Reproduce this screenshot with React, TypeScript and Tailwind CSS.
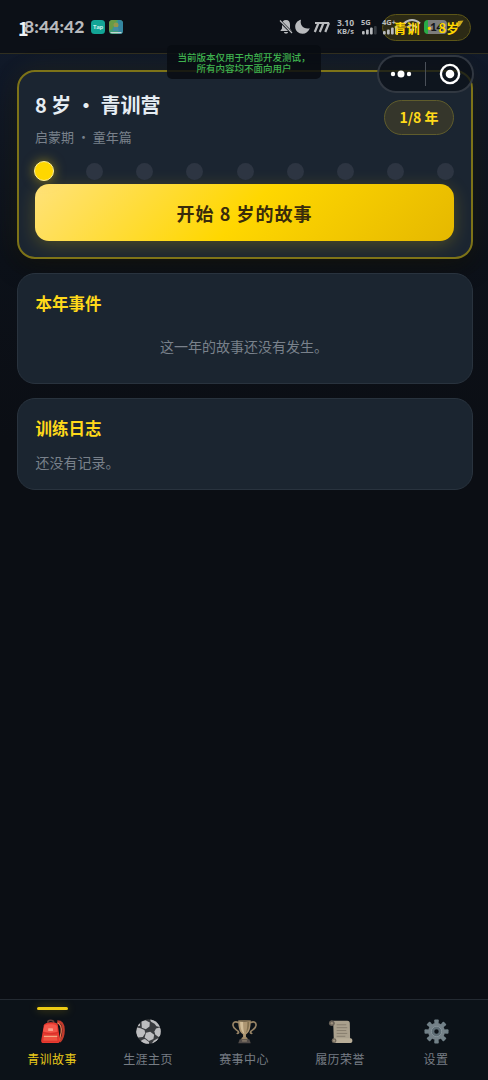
import type { ReactNode } from 'react';

interface TabItem {
  label: string;
  icon: ReactNode;
}

const STAGES = [8, 9, 10, 11, 12, 13, 14, 15, 16];

function BackpackIcon() {
  return (
    <svg viewBox="0 0 26 26" className="h-[25px] w-[25px]">
      <path d="M18 2.500c4.500 0 6.500 4 6.500 9 0 5-1 9-4 12" fill="none" stroke="#c23a2c" strokeWidth="2.600" />
      <path d="M18 4c3 1 4.600 5 4 10l-2 9" fill="none" stroke="#f47b52" strokeWidth="1.300" />
      <path d="M8 4c0-3.500 6-3.500 6.500 0" fill="none" stroke="#69443c" strokeWidth="1.600" />
      <path d="M4 6.500C5 3 17 2 18.500 6l2.200 16c.2 2.200-1 3-3 3H4c-2.300 0-3-1-2.700-3z" fill="#e8392f" />
      <path d="M4.500 7c3-2 10-2 13 0l.7 6c-4 1.600-10 1.600-15 0z" fill="#f4574a" />
      <path d="M3 14c5 1.800 11 1.800 16 0" fill="none" stroke="#d02f29" strokeWidth=".8" />
      <rect x="8.500" y="9.500" width="5" height="3" rx=".6" fill="#f9a18c" />
      <path d="M3.500 17.500h14.500l.7 5.500H3z" fill="#f0513f" stroke="#c52b27" strokeWidth=".5" />
      <path d="M4 18h14" stroke="#f6b48b" strokeWidth="1.200" />
    </svg>
  );
}

function BallIcon() {
  return (
    <svg viewBox="0 0 25 25" className="h-[25px] w-[25px]">
      <defs>
        <clipPath id="ball">
          <circle cx="12.500" cy="12.500" r="12.300" />
        </clipPath>
      </defs>
      <g clipPath="url(#ball)">
        <circle cx="12.500" cy="12.500" r="12.500" fill="#393b3e" />
        <g fill="#bdbdbf">
          <path d="M5.500 2.500L9.500 1.200l4.300 2.300-.3 4-3.700 2.700-4-1.500z" />
          <path d="M15 2.800L14 .5l4-.5 6 5.500-.3 2.500-3.200-.8-2-2.500z" />
          <path d="M1 8.500l3.500.8 4 1.800.8 2.800-2.500 4-5 .5-2-5z" />
          <path d="M10 13.800l4.200-1.100 4 3-.8 4.200-4.500 2-4.300-3.300z" />
          <path d="M20 9.500l3.500-1 2 1.500-.3 6-2.700 2-3.300-2.500-.8-3z" />
          <path d="M7 20.500l2-.5 4 3v2.500H8l-4-3z" />
          <path d="M18 21.500l3.500-2 1.500.3-4.500 4.500-3 .5z" />
          <path d="M2.200 5.800L4 4.200v2.600l-2 .4z" />
        </g>
      </g>
    </svg>
  );
}

function TrophyIcon() {
  return (
    <svg viewBox="0 0 26 26" className="h-[25px] w-[25px]">
      <path
        d="M7 3.800C3 2 .8 3.500 1 6.500c.3 4 4 4.500 5.500 6.500 1 1.500-.5 2.500-1.500 1.500M19 3.800c4-1.800 6.200-.3 6 2.700-.3 4-4 4.500-5.500 6.500-1 1.500.5 2.500 1.500 1.500"
        fill="none"
        stroke="#988466"
        strokeWidth="1.700"
      />
      <path d="M6.500 1.500h13c0 8-1.500 12.500-5 14.500v4.500h-3V16C8 14 6.500 9.500 6.500 1.500z" fill="#ad9672" />
      <path d="M8.500 3h3c0 5 .3 9 1.500 12.500C10 13.500 8.500 9 8.500 3z" fill="#d1bd98" />
      <path d="M16 3h2c0 5-1 9-3.500 11.500C15.600 11 16 7 16 3z" fill="#82704f" />
      <ellipse cx="13" cy="2" rx="6.500" ry="1" fill="#75664d" />
      <path d="M10.500 19h5l1.500 3H9z" fill="#9c8767" />
      <path d="M8 21h10l1.500 4.300h-13z" fill="#514b49" />
      <path d="M10.500 22h5v1.500h-5z" fill="#86796a" />
    </svg>
  );
}

function ScrollIcon() {
  return (
    <svg viewBox="0 0 26 26" className="h-[25px] w-[25px]">
      <path d="M3 1.800h17c2 0 2.800 1.200 2.700 3L23 21H6L5.500 6H3z" fill="#aaa08d" />
      <path d="M3.500 1.500c2.500 0 3.500 1.200 3.500 3s-1.200 2.800-3 2.800S1 6.300 1 4.400s1-2.900 2.500-2.900z" fill="#696158" />
      <circle cx="4" cy="4.500" r="1.300" fill="#9b8f7d" />
      <path d="M9 6h10M9 9h11M9 12h10M9 15h11M9 18h9" stroke="#7d7466" strokeWidth=".8" />
      <path d="M6 20h17.500c2.500 0 2.500 5 0 5H6.500z" fill="#b8ad98" />
      <circle cx="6.300" cy="22.500" r="2.500" fill="#71685c" />
      <circle cx="6.300" cy="22.500" r="1.100" fill="#a49883" />
    </svg>
  );
}

function GearIcon() {
  return (
    <svg viewBox="0 0 26 26" className="h-[25px] w-[25px]">
      <g fill="#718087">
        {[0, 45, 90, 135, 180, 225, 270, 315].map((a) => (
          <path key={a} d="M11 6l-.4-4.500q0-1 1-1h2.800q1 0 1 1L15 6z" transform={`rotate(${a} 13 13)`} />
        ))}
      </g>
      <circle cx="13" cy="13" r="6.500" fill="none" stroke="#748188" strokeWidth="4.500" />
      <circle cx="13" cy="13" r="5.200" fill="none" stroke="#8a989f" strokeWidth="1" />
      <circle cx="13" cy="13" r="3.600" fill="none" stroke="#5f6e76" strokeWidth="2.600" />
    </svg>
  );
}

const TABS: TabItem[] = [
  { label: '青训故事', icon: <BackpackIcon /> },
  { label: '生涯主页', icon: <BallIcon /> },
  { label: '赛事中心', icon: <TrophyIcon /> },
  { label: '履历荣誉', icon: <ScrollIcon /> },
  { label: '设置', icon: <GearIcon /> },
];

function Signal({ label, last }: { label: string; last: string }) {
  return (
    <div className="flex w-[17px] flex-col">
      <span className="h-[8px] whitespace-nowrap text-[7.500px] leading-[8px] font-bold">{label}</span>
      <svg viewBox="0 0 17 9" className="h-[9px] w-[17px]" fill="#b9bbbe">
        <rect x="1" y="5" width="2.700" height="3.500" rx="1" />
        <rect x="5" y="3.500" width="2.700" height="5" rx="1" />
        <rect x="9" y="1.500" width="2.700" height="7" rx="1" />
        <rect x="13" y="0" width="2.700" height="8.500" rx="1" fill={last} />
      </svg>
    </div>
  );
}

// System status bar, drawn over the app header
function StatusBar() {
  return (
    <div className="pointer-events-none absolute inset-x-0 top-0 z-10 h-[54px] text-[#b9bbbe]">
      <div className="absolute top-[15px] left-[24px] flex h-6 items-center">
        <span className="w-[62px] whitespace-nowrap font-['Lato'] text-[17.500px] font-black tracking-[0.1px]">8:44:42</span>
        <span className="ml-[5px] flex h-[14px] w-[14px] items-center justify-center rounded-[3.500px] bg-[#13a596] font-['Open_Sans'] text-[6px] font-bold tracking-[-0.3px] text-[#c6efe9]">
          Tap
        </span>
        <svg viewBox="0 0 14 14" className="ml-[4px] h-[14px] w-[14px] rounded-[3.500px]">
          <rect width="14" height="14" fill="#3c9d79" />
          <path d="M0 0h8L3 9l-3 2z" fill="#689b45" />
          <path d="M9 0h5v14H9z" fill="#3485a0" />
          <circle cx="7" cy="5" r="2.500" fill="#96954b" />
          <path d="M5 7h4l1 4H4z" fill="#438ba2" />
          <path d="M1.500 12h11v1.300h-11z" fill="#c5d6d2" />
        </svg>
      </div>

      <svg viewBox="0 0 52 16" className="absolute top-[19px] left-[279px] h-4 w-[52px]" fill="#b9bbbe">
        <path d="M7 1c-2.800 0-4 2-4 4.500v4L1.300 12h11.400L11 9.500v-4C11 3 9.800 1 7 1zM5 13h4c0 2-4 2-4 0z" />
        <path d="M1 2l12 12" stroke="#0d1117" strokeWidth="2.600" />
        <path d="M1 1.500l12 12.500" stroke="#b9bbbe" strokeWidth="1.200" />
        <path d="M22 .8c-1.500 5 2.500 10 8.800 8.500-1.200 3.500-4 5.500-7.300 5.500-4 0-7.300-3-7.300-7C16.200 4.300 18.600 1.500 22 .8z" />
        <path d="M36 4h14.200M39.500 4l-3.700 9M44.500 4l-3.700 9M50 4l-3.700 9" fill="none" stroke="#b9bbbe" strokeWidth="2.200" />
      </svg>

      <div className="absolute top-[19px] left-[336px] flex w-[19px] flex-col items-center font-['Open_Sans'] text-[8.500px] leading-[8px] font-bold">
        <span>3.10</span>
        <span className="text-[7.500px]">KB/s</span>
      </div>
      <div className="absolute top-[18px] left-[361px] flex gap-[4px] font-['Open_Sans']">
        <Signal label="5G" last="#353a40" />
        <Signal label="4G+" last="#b9bbbe" />
      </div>
      <svg viewBox="0 0 18 15" className="absolute top-[19px] left-[403px] h-[15px] w-[18px]" fill="none" stroke="#b9bbbe" strokeWidth="2.200">
        <path d="M1 4.500c5-4.500 11-4.500 16 0M4 8.500c3-3 7-3 10 0" />
        <path d="M6.500 10.500L9 14l2.500-3.500c-1.500-1.500-3.500-1.500-5 0z" fill="#b9bbbe" stroke="none" />
      </svg>
      <div className="absolute top-[20px] left-[424px] flex h-[14px] w-[23px] items-center rounded-[4px] border-l-[4px] border-[#28ac45] bg-[#7c7d7c] pl-[2px] font-['Lato'] text-[12px] font-black tracking-[-0.4px] text-[#15181c]">
        14
      </div>
      <svg viewBox="0 0 9 12" className="absolute top-[20px] left-[455px] h-3 w-[9px]">
        <path d="M3 1l5.500-.5L5 6 2 8z" fill="#cda91c" />
      </svg>
    </div>
  );
}

function Capsule() {
  return (
    <div className="absolute top-[55px] left-[377px] z-20 flex h-[38px] w-[97px] items-center rounded-full border-2 border-[#3b414b]/80 bg-[#0b1018]/75">
      <svg viewBox="0 0 93 34" className="h-[34px] w-[93px]" fill="#fff">
        <circle cx="14" cy="17" r="2.200" />
        <circle cx="22" cy="17" r="3.500" />
        <circle cx="30" cy="17" r="2.200" />
        <path d="M46 5h1v24h-1z" fill="#4a5059" />
        <circle cx="71" cy="17" r="9.100" fill="none" stroke="#fff" strokeWidth="2.300" />
        <circle cx="71" cy="17" r="4.300" />
      </svg>
    </div>
  );
}

export default function App() {
  return (
    <div
      lang="zh-CN"
      className="relative flex h-[1080px] w-[488px] flex-col overflow-hidden bg-[#0b0e14] bg-[linear-gradient(180deg,#111b2b_0px,#101827_90px,#0c1119_260px,#0b0e14_440px)] font-['Noto_Sans_CJK_SC',sans-serif] text-[#e6edf3]"
    >
      <header className="flex h-[54px] shrink-0 items-center justify-between border-b border-[#302f20] bg-[#0c1017] pr-[17px] pl-[18px]">
        <span className="mt-[3px] text-[18px] font-bold text-[#f0f3f6]">1</span>
        <span className="mt-[2px] flex h-[27px] w-[89px] items-center justify-center rounded-full border border-[#5d5618] bg-[#2c2a15] text-[13px] font-bold whitespace-pre text-[#ffd700]">
          <span className="relative z-20">青训 · 8岁</span>
        </span>
      </header>

      <main className="flex flex-1 flex-col gap-[14px] pt-[16px] pr-[15.500px] pl-[16.500px]">
        <section className="h-[189px] rounded-[18px] border-2 border-[#7d7318] bg-[#1b2531] px-[16.500px] shadow-[0_0_28px_rgba(255,215,0,0.07),0_8px_24px_rgba(0,0,0,0.4)]">
          <div className="flex h-[82px] justify-between">
            <div className="pt-[18px]">
              <h1 className="text-[20px] leading-[30px] font-bold whitespace-nowrap">8 岁 · 青训营</h1>
              <p className="mt-[7px] text-[13px] leading-[20px] whitespace-nowrap text-[#79818b]">启蒙期 · 童年篇</p>
            </div>
            <span className="mt-[28px] flex h-[35px] w-[70px] items-center justify-center rounded-full border border-[#5f5c2c] bg-[#35362b] text-[14px] font-bold text-[#ffd91a]">
              1/8 年
            </span>
          </div>
          <div className="flex h-[30px] items-center justify-between pt-[4px]">
            {STAGES.map((age, i) =>
              i === 0 ? (
                <span
                  key={age}
                  className="-mr-[1px] -ml-[1px] h-5 w-5 rounded-full border-[1.500px] border-[#fff09a] bg-[#ffd700] shadow-[0_0_12px_rgba(255,215,0,0.5)]"
                />
              ) : (
                <span key={age} className="h-[17px] w-[17px] rounded-full bg-[#2d3542]" />
              ),
            )}
          </div>
          <button className="flex h-[57px] w-full items-center justify-center rounded-[14px] bg-[linear-gradient(135deg,#ffe27a_0%,#ffd700_50%,#e5b800_100%)] pt-px text-[18px] font-bold tracking-[1px] text-[#392b0b] shadow-[0_4px_18px_rgba(255,215,0,0.22)]">
            开始 8 岁的故事
          </button>
        </section>

        <section className="h-[111px] rounded-[18px] border border-[#29333e] bg-[#1b2530] px-[18px] pt-[16px]">
          <h2 className="text-[16.500px] leading-[26px] font-bold text-[#ffd91a]">本年事件</h2>
          <p className="mt-[19px] -ml-px text-center text-[14px] leading-[22px] text-[#79818b]">这一年的故事还没有发生。</p>
        </section>

        <section className="h-[92px] rounded-[18px] border border-[#29333e] bg-[#1b2530] px-[18px] pt-[16px]">
          <h2 className="text-[16.500px] leading-[26px] font-bold text-[#ffd91a]">训练日志</h2>
          <p className="mt-[10px] text-[14px] leading-[22px] text-[#79818b]">还没有记录。</p>
        </section>
      </main>

      <nav className="flex h-[81px] shrink-0 border-t border-[#242a32] bg-[#0c1218] px-1">
        {TABS.map((tab, i) => (
          <button key={tab.label} className="relative flex flex-1 flex-col items-center pt-[19px]">
            {i === 0 && (
              <span className="absolute top-[7px] h-[3px] w-[31px] rounded-full bg-[#edcb14] shadow-[0_0_9px_rgba(255,215,0,0.35)]" />
            )}
            {tab.icon}
            <span
              className={`mt-[6px] text-[12px] leading-[18px] tracking-[0.4px] ${i === 0 ? 'text-[#e9ca1a]' : 'text-[#777d84]'}`}
            >
              {tab.label}
            </span>
          </button>
        ))}
      </nav>

      <StatusBar />
      <div className="absolute top-[45px] left-[167px] z-20 flex h-[34px] w-[154px] flex-col items-center justify-center rounded-[5px] bg-[#080c12]/85 pt-[2px] text-[9.500px] leading-[11px] font-medium whitespace-nowrap text-[#3fb34f]">
        <span>当前版本仅用于内部开发测试，</span>
        <span>所有内容均不面向用户</span>
      </div>
      <Capsule />
    </div>
  );
}
